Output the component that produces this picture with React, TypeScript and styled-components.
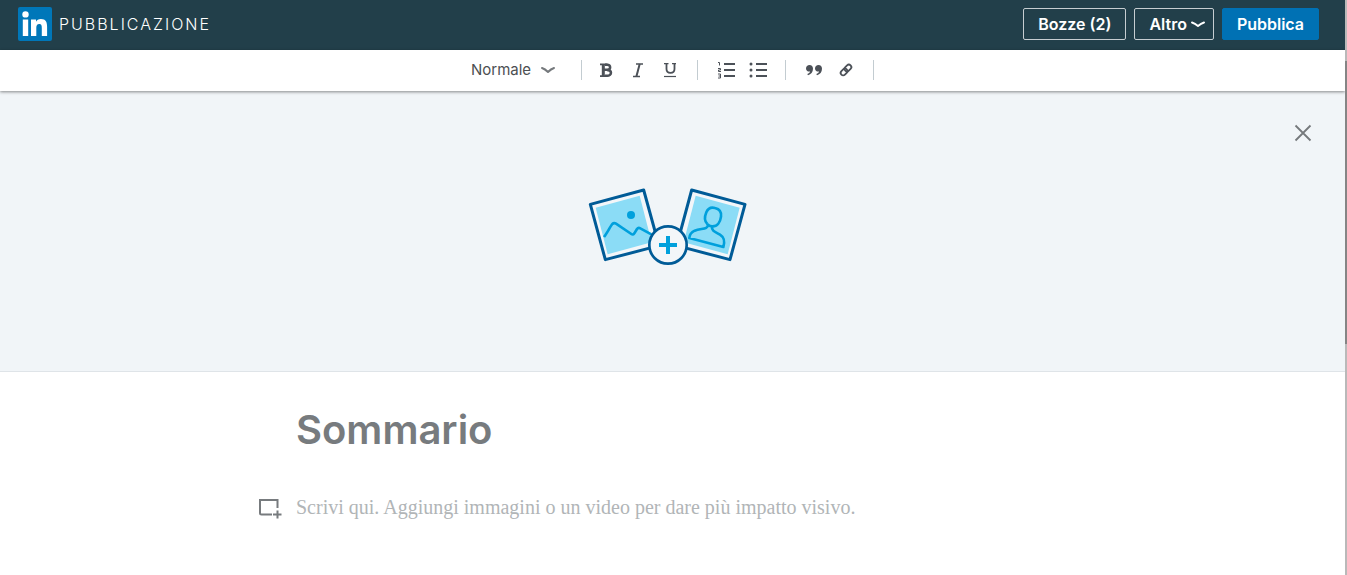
import React from 'react';
import styled, { createGlobalStyle } from 'styled-components';

const sans = `Inter, "Liberation Sans", sans-serif`;
const serif = `"Liberation Serif", "Times New Roman", serif`;

const GlobalStyle = createGlobalStyle`
  *, *::before, *::after { box-sizing: border-box; }
  body { margin: 0; background: #fff; font-family: ${sans}; }
  button, input, select, textarea { font: inherit; margin: 0; }
`;

const Shell = styled.div`
  display: flex;
  min-height: 100vh;
`;

const Page = styled.div`
  flex: 1;
  min-width: 0;
  display: flex;
  flex-direction: column;
  overflow-x: clip;
`;

const ScrollTrack = styled.div`
  flex: none;
  width: 2px;
  background: #b9b9b9;
`;

const ScrollThumb = styled.div`
  margin-top: 61px;
  height: 283px;
  background: #858585;
`;

const Header = styled.header`
  display: flex;
  align-items: center;
  justify-content: space-between;
  height: 50px;
  padding: 0 26px 2px 18px;
  background: #223f4a;
`;

const Brand = styled.a`
  display: flex;
  align-items: center;
  gap: 7px;
  color: #fff;
  font-size: 16px;
  font-weight: 300;
  line-height: 24px;
  letter-spacing: 2px;
  text-decoration: none;
`;

const Actions = styled.div`
  display: flex;
  gap: 8px;
`;

const ActionButton = styled.button<{ $primary?: boolean; $menu?: boolean }>`
  display: flex;
  align-items: center;
  justify-content: center;
  gap: 4px;
  height: 32px;
  padding: 0 ${p => (p.$menu ? 8 : 14)}px 0 14px;
  border: 1px solid ${p => (p.$primary ? '#0071b4' : '#c6cdd1')};
  border-radius: 2px;
  background: ${p => (p.$primary ? '#0071b4' : 'transparent')};
  color: #fff;
  font-size: 16px;
  font-weight: 600;
  line-height: 24px;
  white-space: nowrap;
`;

const Toolbar = styled.div`
  position: relative;
  z-index: 1;
  display: flex;
  align-items: center;
  justify-content: center;
  height: 41px;
  padding-bottom: 2px;
  background: #fff;
  box-shadow: 0 1px 3px rgba(0, 0, 0, 0.45);
`;

const StyleField = styled.label`
  display: grid;
  align-items: center;
  width: 110px;
`;

const StyleSelect = styled.select`
  grid-area: 1 / 1;
  width: 88px;
  height: 32px;
  padding: 0;
  border: 0;
  appearance: none;
  background: transparent;
  color: #4c4f52;
  font-size: 15px;
`;

const StyleChevron = styled.svg`
  grid-area: 1 / 1;
  margin-left: 70px;
  pointer-events: none;
`;

const Divider = styled.span<{ $after: number }>`
  width: 1px;
  height: 20px;
  margin-right: ${p => p.$after}px;
  background: #c3ccd1;
`;

const ToolGroup = styled.div`
  display: flex;
  margin-right: 11px;
`;

const ToolButton = styled.button`
  display: flex;
  align-items: center;
  justify-content: center;
  width: 32px;
  height: 32px;
  padding: 0;
  border: 0;
  background: transparent;
  color: #4c5158;
`;

const Cover = styled.section`
  display: flex;
  flex-direction: column;
  height: 281px;
  padding: 26px 26px 0;
  border-bottom: 1px solid #dfe4e8;
  background: #f1f5f8;
`;

const CloseButton = styled.button`
  align-self: flex-end;
  display: flex;
  align-items: center;
  justify-content: center;
  width: 32px;
  height: 32px;
  padding: 0;
  border: 0;
  background: transparent;
  color: #75797c;
`;

const CoverButton = styled.button`
  align-self: center;
  display: flex;
  margin: 31px 10px 0 0;
  padding: 0;
  border: 0;
  background: transparent;
`;

const Editor = styled.main`
  display: grid;
  grid-template-columns: 37px minmax(0, 753px) 37px;
  justify-content: center;
  row-gap: 40px;
  padding-top: 32px;
`;

const TitleInput = styled.input`
  grid-column: 2;
  width: 100%;
  height: 52px;
  padding: 0;
  border: 0;
  outline: 0;
  font-size: 40px;
  font-weight: 600;
  line-height: 52px;
  &::placeholder { color: #777b7e; opacity: 1; }
`;

const InsertButton = styled.button`
  grid-column: 1;
  display: flex;
  align-items: center;
  width: 24px;
  height: 24px;
  padding: 0;
  border: 0;
  background: transparent;
`;

const BodyInput = styled.textarea`
  grid-column: 2;
  width: 100%;
  height: 56px;
  padding: 0;
  border: 0;
  outline: 0;
  resize: none;
  font-family: ${serif};
  font-size: 20px;
  line-height: 22px;
  &::placeholder { color: #b1b5b7; opacity: 1; }
`;

const Logo = () => (
  <svg width="34" height="34" viewBox="0 0 34 34" aria-hidden="true">
    <rect width="34" height="34" rx="2" fill="#0077b9" />
    <circle cx="7.5" cy="7.400" r="3.200" fill="#fff" />
    <path fill="#fff" d="M4.800 12.500h5.400V29H4.800zM13 12.500h5v2.200c.7-1.300 2.400-2.700 4.900-2.700 5.100 0 6.200 3.300 6.200 7.700V29h-5.300v-7.800c0-1.900 0-4.300-2.500-4.300s-3 2-3 4.200V29H13z" />
  </svg>
);

const CoverArt = () => (
  <svg width="185" height="95" viewBox="0 0 555 285" fill="none" aria-hidden="true">
    <g strokeLinejoin="round">
      <path d="M46 73 206 30 252 197 91 239Z" fill="#f3f6f9" stroke="#005b97" strokeWidth="9" />
      <path d="M62 83 194 47 230 187 98 223Z" fill="#8bdcf6" />
      <path d="M87 171C97 158 106 139 112 132Q117 127 123 131L169 162Q174 166 178 160L186 147Q190 141 196 145L229 163" stroke="#00a0dc" strokeWidth="8" />
      <circle cx="168" cy="105" r="12" fill="#00a0dc" />
      <path d="M350 30 510 73 465 239 305 197Z" fill="#f3f6f9" stroke="#005b97" strokeWidth="9" />
      <path d="M362 47 494 83 458 223 326 187Z" fill="#8bdcf6" />
      <path d="M397 132C387 123 389 109 394 97C399 85 409 81 420 84C433 87 440 96 438 110C436 126 427 140 411 139Q402 139 397 132" stroke="#00a0dc" strokeWidth="8" />
      <path d="M399 134C399 150 379 144 359 152Q344 159 343 174L445 201C450 184 449 173 435 164C421 156 409 153 411 139" stroke="#00a0dc" strokeWidth="8" />
    </g>
    <circle cx="279" cy="195" r="56" fill="#f3f6f9" stroke="#005b97" strokeWidth="8" />
    <path d="M279 168V222M252 195H306" stroke="#00a0dc" strokeWidth="12" />
  </svg>
);

const BoldIcon = () => (
  <svg width="16" height="16" viewBox="0 0 16 16" fill="none" stroke="currentColor" aria-hidden="true">
    <path d="M2 2.400h7.500M2 14.100h7.500" strokeWidth="1.800" />
    <path d="M5.300 2v12" strokeWidth="3" />
    <path d="M7 2.700h2c4.200 0 4.200 5.100 0 5.100H6M9 7.900c5.300 0 5.300 5.900 0 5.900H7" strokeWidth="2.500" />
  </svg>
);

const ItalicIcon = () => (
  <svg width="16" height="16" viewBox="0 0 16 16" fill="none" stroke="currentColor" aria-hidden="true">
    <path d="M6 2h7M3 14.500h7" strokeWidth="1.400" />
    <path d="M9.700 2 6.400 14.500" strokeWidth="2" />
  </svg>
);

const UnderlineIcon = () => (
  <svg width="16" height="16" viewBox="0 0 16 16" fill="none" stroke="currentColor" aria-hidden="true">
    <path d="M2 1.600h4.500M10 1.600h4" strokeWidth="1.200" />
    <path d="M4.500 1.500V7c0 5.200 8 5.200 8 0V1.500" strokeWidth="1.800" />
    <path d="M2 14.500h12" strokeWidth="1.200" />
  </svg>
);

const listLines = 'M8 3h11M8 9h11M8 15h11';

const NumberedIcon = () => (
  <svg width="20" height="18" viewBox="0 0 20 18" fill="none" stroke="currentColor" aria-hidden="true">
    <path d={listLines} strokeWidth="2" />
    <path d="M2 1.500h1.500v3M2 7.500h2.500V9H2.500v1.500H5M2 13h2.500v4H2M2.500 15h2" strokeWidth="1" />
  </svg>
);

const BulletedIcon = () => (
  <svg width="20" height="18" viewBox="0 0 20 18" fill="currentColor" aria-hidden="true">
    <path d={listLines} stroke="currentColor" strokeWidth="2" />
    <circle cx="3" cy="3" r="1.500" />
    <circle cx="3" cy="9" r="1.500" />
    <circle cx="3" cy="15" r="1.500" />
  </svg>
);

const QuoteIcon = () => (
  <svg width="18" height="12" viewBox="0 0 18 12" fill="currentColor" aria-hidden="true">
    <path d="M4.500 1c2.200 0 3.500 1.500 3.500 3.800C8 8 6 10.500 3 11.200l-.7-1.100C3.800 9.500 4.800 8.800 5.100 7.500 2.600 7.800 1 6.300 1 4.400 1 2.400 2.500 1 4.500 1zM13.500 1c2.200 0 3.500 1.500 3.500 3.800 0 3.200-2 5.700-5 6.400l-.7-1.100c1.500-.6 2.500-1.300 2.800-2.600-2.500.3-4.100-1.200-4.100-3.100C10 2.400 11.500 1 13.500 1z" />
  </svg>
);

const LinkIcon = () => (
  <svg width="16" height="16" viewBox="0 0 16 16" fill="none" stroke="currentColor" strokeWidth="1.800" aria-hidden="true">
    <g transform="rotate(-45 8 8)">
      <rect x="1.500" y="5.500" width="7.500" height="5" rx="2.500" />
      <rect x="7" y="5.500" width="7.500" height="5" rx="2.500" />
    </g>
  </svg>
);

export default function App() {
  return (
    <>
      <GlobalStyle />
      <Shell>
        <Page>
          <Header>
            <Brand href="#">
              <Logo />
              PUBBLICAZIONE
            </Brand>
            <Actions>
              <ActionButton type="button">Bozze (2)</ActionButton>
              <ActionButton type="button" $menu>
                Altro
                <svg width="14" height="8" viewBox="0 0 14 8" fill="none" aria-hidden="true">
                  <path d="M1 2.500Q4 3.500 7 6Q10 3.500 13 2.500" stroke="#fff" strokeWidth="2" strokeLinecap="round" strokeLinejoin="round" />
                </svg>
              </ActionButton>
              <ActionButton type="button" $primary>Pubblica</ActionButton>
            </Actions>
          </Header>
          <Toolbar role="toolbar" aria-label="Formattazione">
            <StyleField>
              <StyleSelect aria-label="Stile" defaultValue="Normale">
                <option>Normale</option>
              </StyleSelect>
              <StyleChevron width="14" height="8" viewBox="0 0 14 8" fill="none" aria-hidden="true">
                <path d="M1 2Q4 3 7 6Q10 3 13 2" stroke="#75797c" strokeWidth="2" strokeLinecap="round" strokeLinejoin="round" />
              </StyleChevron>
            </StyleField>
            <Divider $after={8} />
            <ToolGroup>
              <ToolButton type="button" aria-label="Grassetto"><BoldIcon /></ToolButton>
              <ToolButton type="button" aria-label="Corsivo"><ItalicIcon /></ToolButton>
              <ToolButton type="button" aria-label="Sottolineato"><UnderlineIcon /></ToolButton>
            </ToolGroup>
            <Divider $after={12} />
            <ToolGroup>
              <ToolButton type="button" aria-label="Elenco numerato"><NumberedIcon /></ToolButton>
              <ToolButton type="button" aria-label="Elenco puntato"><BulletedIcon /></ToolButton>
            </ToolGroup>
            <Divider $after={12} />
            <ToolGroup>
              <ToolButton type="button" aria-label="Citazione"><QuoteIcon /></ToolButton>
              <ToolButton type="button" aria-label="Link"><LinkIcon /></ToolButton>
            </ToolGroup>
            <Divider $after={0} />
          </Toolbar>
          <Cover>
            <CloseButton type="button" aria-label="Chiudi">
              <svg width="18" height="18" viewBox="0 0 18 18" fill="none" aria-hidden="true">
                <path d="M1.500 1.500 16.500 16.500M16.500 1.500 1.500 16.500" stroke="currentColor" strokeWidth="1.800" />
              </svg>
            </CloseButton>
            <CoverButton type="button" aria-label="Aggiungi immagine di copertina">
              <CoverArt />
            </CoverButton>
          </Cover>
          <Editor>
            <TitleInput type="text" aria-label="Sommario" placeholder="Sommario" />
            <InsertButton type="button" aria-label="Aggiungi contenuto">
              <svg width="24" height="24" viewBox="0 0 24 24" fill="none" stroke="#777b7e" strokeWidth="2" aria-hidden="true">
                <path d="M13 18.500H2.500Q1 18.500 1 17V4H18.500V12M14 18.500H22.500M18.500 14.500V22.500" />
              </svg>
            </InsertButton>
            <BodyInput
              aria-label="Testo"
              placeholder="Scrivi qui. Aggiungi immagini o un video per dare più impatto visivo."
            />
          </Editor>
        </Page>
        <ScrollTrack aria-hidden="true">
          <ScrollThumb />
        </ScrollTrack>
      </Shell>
    </>
  );
}
